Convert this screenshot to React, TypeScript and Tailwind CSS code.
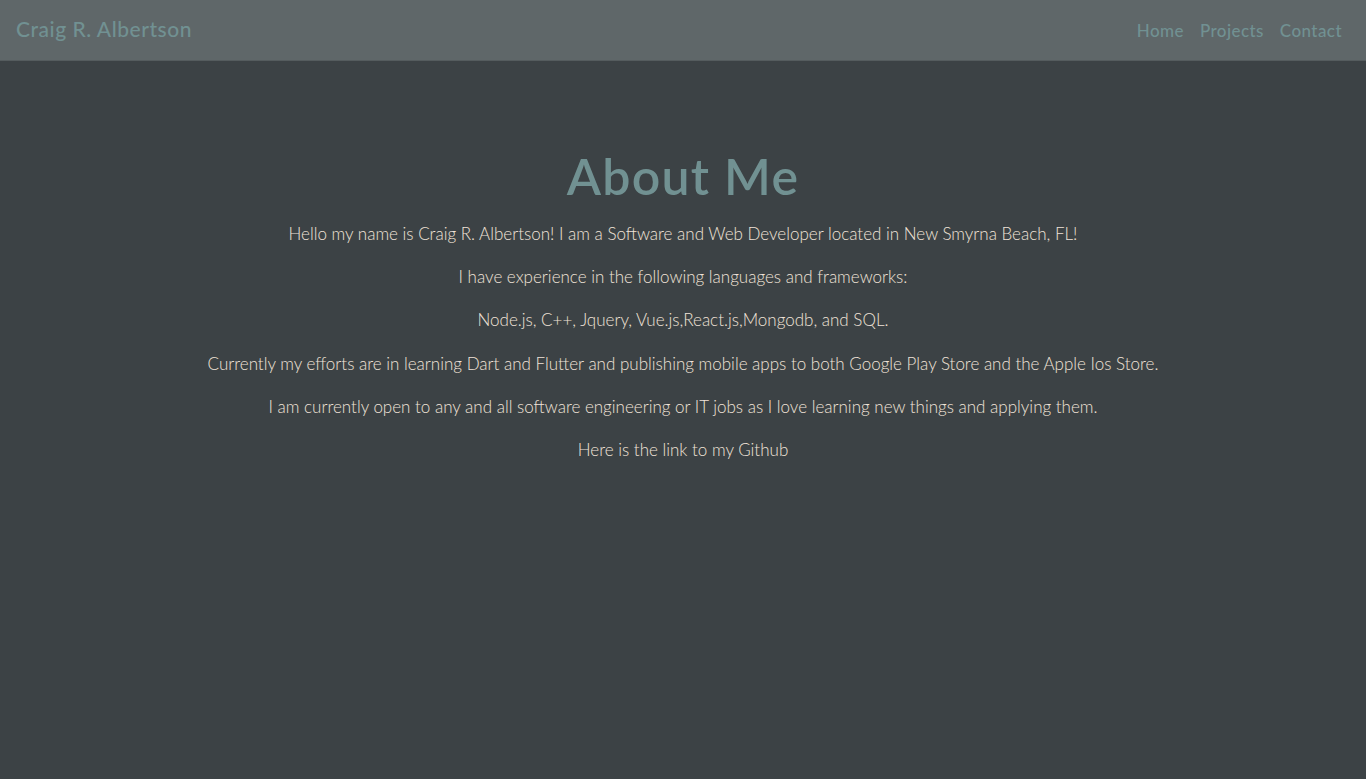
export default function App() {
  const paragraphs = [
    "Hello my name is Craig R. Albertson! I am a Software and Web Developer located in New Smyrna Beach, FL!",
    "I have experience in the following languages and frameworks:",
    "Node.js, C++, Jquery, Vue.js,React.js,Mongodb, and SQL.",
    "Currently my efforts are in learning Dart and Flutter and publishing mobile apps to both Google Play Store and the Apple Ios Store.",
    "I am currently open to any and all software engineering or IT jobs as I love learning new things and applying them.",
  ];

  return (
    <div className="min-h-screen bg-[#3c4245] font-['Lato',sans-serif]">
      {/* NAVBAR */}
      <header className="h-[61px] bg-[#5f6769] border-b border-[#555c5e] flex items-center justify-between pl-4 pr-6">
        <a href="#" className="text-[21px] font-medium text-[#719192] tracking-wide -mt-0.5">
          Craig R. Albertson
        </a>
        <nav className="flex items-center gap-4 text-[17px] font-medium text-[#719192] tracking-wide pt-0.5">
          <a href="#">Home</a>
          <a href="#">Projects</a>
          <a href="#">Contact</a>
        </nav>
      </header>

      {/* ABOUT */}
      <main className="pt-[84px] text-center">
        <h1 className="text-[50px] font-semibold text-[#719192] tracking-wide leading-tight">About Me</h1>
        <div className="mt-[13px] text-[17px] font-light text-[#f0e2d8] leading-[26px] space-y-[17.4px]">
          {paragraphs.map((p) => (
            <p key={p}>{p}</p>
          ))}
          <p>
            Here is the link to my <a href="#">Github</a>
          </p>
        </div>
      </main>
    </div>
  );
}
